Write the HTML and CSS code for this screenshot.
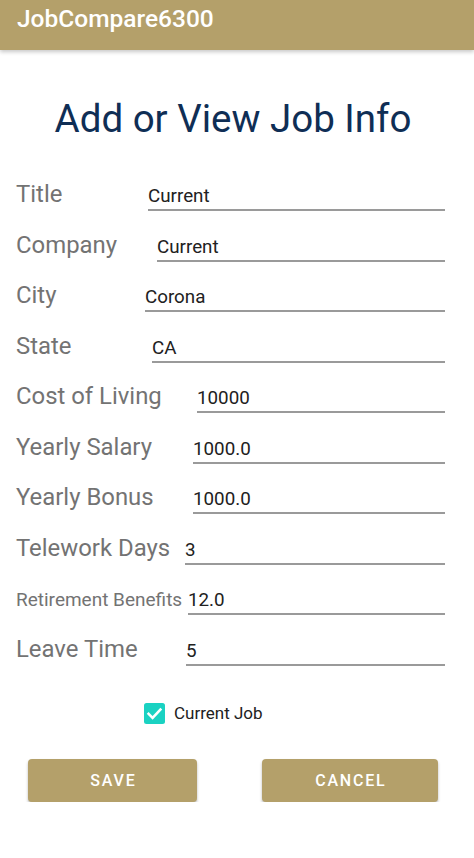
FILE: index.html
```html
<!DOCTYPE html>
<html lang="en">
<head>
<meta charset="utf-8">
<title>JobCompare6300</title>
<link rel="stylesheet" href="styles.css">
</head>
<body>
<header class="appbar">JobCompare6300</header>
<main class="page">
  <h1 class="title">Add or View Job Info</h1>
  <div class="form">
    <div class="row row-title"><span class="label">Title</span><span class="field">Current</span></div>
    <div class="row row-company"><span class="label">Company</span><span class="field">Current</span></div>
    <div class="row row-city"><span class="label">City</span><span class="field">Corona</span></div>
    <div class="row row-state"><span class="label">State</span><span class="field">CA</span></div>
    <div class="row row-col"><span class="label">Cost of Living</span><span class="field">10000</span></div>
    <div class="row row-salary"><span class="label">Yearly Salary</span><span class="field">1000.0</span></div>
    <div class="row row-bonus"><span class="label">Yearly Bonus</span><span class="field">1000.0</span></div>
    <div class="row row-telework"><span class="label">Telework Days</span><span class="field">3</span></div>
    <div class="row row-retire"><span class="label label-small">Retirement Benefits</span><span class="field">12.0</span></div>
    <div class="row row-leave"><span class="label">Leave Time</span><span class="field">5</span></div>
  </div>
  <div class="check-row">
    <svg class="checkbox" width="21" height="21" viewBox="0 0 21 21" aria-hidden="true">
      <rect x="0" y="0" width="21" height="21" rx="2.5" fill="#1ad2c2"/>
      <path d="M4.6 10.8 L8.6 14.8 L16.4 6.6" fill="none" stroke="#ffffff" stroke-width="2.6" stroke-linecap="square"/>
    </svg>
    <span class="check-label">Current Job</span>
  </div>
  <div class="actions">
    <button class="btn btn-save" type="button">SAVE</button>
    <button class="btn btn-cancel" type="button">CANCEL</button>
  </div>
</main>
</body>
</html>
```
FILE: styles.css
```css
html, body {
  margin: 0;
  padding: 0;
  background: #ffffff;
}

body {
  font-family: Roboto, "Noto Sans", "Liberation Sans", sans-serif;
}

.appbar {
  box-sizing: border-box;
  height: 50px;
  padding: 4px 0 0 17px;
  background: #b4a06a;
  color: #ffffff;
  font-size: 24.5px;
  font-weight: 500;
  line-height: 30px;
  box-shadow: 0 2px 4px rgba(0, 0, 0, 0.22);
  position: relative;
}

.page {
  display: flex;
  flex-direction: column;
}

.title {
  margin: 46px 0 26px;
  padding-right: 8px;
  text-align: center;
  font-size: 38.5px;
  line-height: 46px;
  font-weight: 400;
  color: #0f2e55;
}

.form {
  display: flex;
  flex-direction: column;
  padding: 0 29px 0 16px;
}

.row {
  display: grid;
  align-items: baseline;
  box-sizing: border-box;
  height: 50.5px;
  padding-top: 12px;
}

.row-title { grid-template-columns: 132px 1fr; }
.row-company { grid-template-columns: 141px 1fr; }
.row-city { grid-template-columns: 129px 1fr; }
.row-state { grid-template-columns: 136px 1fr; }
.row-col { grid-template-columns: 181px 1fr; }
.row-salary { grid-template-columns: 177px 1fr; }
.row-bonus { grid-template-columns: 177px 1fr; }
.row-telework { grid-template-columns: 169px 1fr; }
.row-retire { grid-template-columns: 172px 1fr; }
.row-leave { grid-template-columns: 170px 1fr; }

.label {
  font-size: 23.9px;
  line-height: 28px;
  color: #737373;
  white-space: nowrap;
}

.label-small {
  font-size: 19px;
  line-height: 31px;
}

.field {
  font-size: 18.8px;
  line-height: 22px;
  padding-bottom: 2px;
  border-bottom: 2px solid #9a9a9a;
  color: #212121;
  white-space: nowrap;
}

.check-row {
  display: flex;
  align-items: center;
  gap: 9px;
  height: 21px;
  margin-top: 30px;
  padding-left: 144px;
}

.checkbox {
  display: block;
  flex: none;
}

.check-label {
  font-size: 17px;
  line-height: 21px;
  color: #212121;
}

.actions {
  display: flex;
  justify-content: space-between;
  margin-top: 35px;
  padding: 0 36px 0 28px;
}

.btn {
  height: 43px;
  border: none;
  border-radius: 4px;
  background: #b4a06a;
  color: #ffffff;
  font-family: Roboto, "Noto Sans", "Liberation Sans", sans-serif;
  font-size: 16px;
  font-weight: 500;
  letter-spacing: 1.8px;
  padding: 0 0 0 1.8px;
  box-shadow: 0 2px 3px rgba(0, 0, 0, 0.28);
}

.btn-save { width: 169px; }
.btn-cancel { width: 176px; }
```
